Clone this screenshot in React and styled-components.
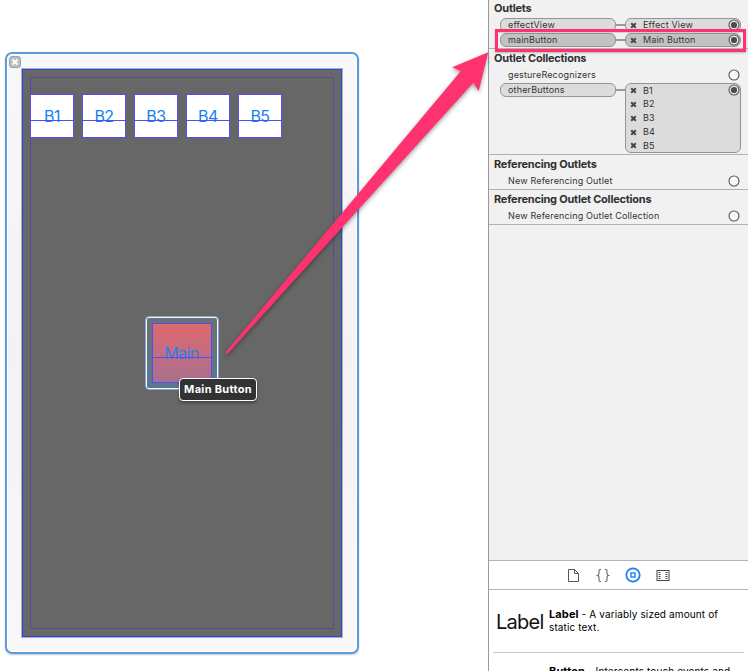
import React from "react";
import styled, { createGlobalStyle, css } from "styled-components";

const Global = createGlobalStyle`
  * { box-sizing: border-box; }
  html, body { margin: 0; overflow: hidden; background: #fff; }
  body { font-family: Inter, "Liberation Sans", sans-serif; }
`;

const Workspace = styled.main`
  position: relative;
  display: flex;
  width: 748px;
  height: 671px;
  overflow: hidden;
  background: #fff;
`;

/* Canvas */
const Canvas = styled.section`
  width: 488px;
  padding: 52px 0 0 5px;
`;
const Scene = styled.div`
  position: relative;
  width: 354px;
  height: 602px;
  padding: 14px;
  border: 2px solid #5b9bd8;
  border-radius: 7px;
  background: linear-gradient(#f8f8f8, #f3f3f3 50%, #f8f8f8);
  box-shadow: inset 0 0 0 1px #fff, 0 1px 2px rgba(0, 0, 0, 0.22);
`;
const CloseBadge = styled.span`
  position: absolute;
  left: 2px;
  top: 2px;
  display: flex;
  width: 12px;
  height: 12px;
  border: 1px solid #98a4ae;
  border-radius: 3px;
  background: #b4bfc7;
`;
const Device = styled.div`
  width: 322px;
  height: 570px;
  border: 1px solid #b0b0b8;
`;
const RootView = styled.div`
  height: 100%;
  padding: 7px;
  border: 1px solid #2447ef;
  background: #676767;
`;
const Margins = styled.div`
  display: flex;
  flex-direction: column;
  align-items: center;
  width: 304px;
  height: 552px;
  border: 1px solid #514ba6;
`;
const ButtonRow = styled.div`
  display: flex;
  align-self: flex-start;
  gap: 8px;
  margin: 16px 0 0 -1px;
`;
const outlined = css`
  display: flex;
  flex-direction: column;
  align-items: center;
  border: 1px solid #514ff0;
  color: #1480f5;
  font-size: 16px;
  letter-spacing: -0.5px;
`;
const SquareButton = styled.div`
  ${outlined}
  width: 44px;
  height: 44px;
  background: #fff;
`;
const MainSelection = styled.div`
  display: flex;
  width: 74px;
  height: 74px;
  margin-top: 178px;
  margin-left: -1px;
  padding: 4px;
  border: 1px solid #86a6d4;
  border-radius: 4px;
  background: linear-gradient(#6b7175, #5a7893);
  box-shadow: inset 0 0 0 1px #f4f6f8;
`;
const MainButton = styled.div`
  ${outlined}
  width: 60px;
  height: 60px;
  margin: 2px;
  background: linear-gradient(#df696e, #a9708e);
  color: #2d7fe6;
  letter-spacing: -0.55px;
`;
const Caption = styled.span`
  height: ${({ $drop }) => $drop}px;
  padding-top: ${({ $drop }) => $drop - 12}px;
  line-height: 15px;
`;
const Baseline = styled.i`
  z-index: 1;
  width: 100%;
  height: 1px;
  margin-top: -1px;
  background: #514ff0;
`;
const Tooltip = styled.div`
  position: absolute;
  left: 179px;
  top: 378px;
  width: 78px;
  height: 23px;
  border: 1px solid #fff;
  border-radius: 4px;
  background: rgba(48, 48, 48, 0.96);
  color: #fff;
  font-size: 11px;
  font-weight: 700;
  letter-spacing: 0.32px;
  line-height: 21px;
  text-align: center;
  white-space: nowrap;
  box-shadow: 0 2px 3px rgba(0, 0, 0, 0.35);
`;

/* Inspector */
const Inspector = styled.aside`
  display: flex;
  flex-direction: column;
  width: 260px;
  height: 671px;
  border-left: 1px solid #999;
  background: #f1f1f1;
`;
const Connections = styled.div`
  height: 561px;
  margin-top: -1px;
`;
const Group = styled.section`
  border-bottom: 1px solid #b2b2b2;
  padding-bottom: ${({ $tail }) => $tail || 0}px;
`;
const Heading = styled.h2`
  margin: 0;
  padding-left: 5px;
  height: 18px;
  color: #303030;
  font-size: 11px;
  font-weight: 700;
  letter-spacing: -0.22px;
  line-height: 18px;
  white-space: nowrap;
`;
const Row = styled.div`
  display: flex;
  align-items: flex-start;
  height: ${({ $h }) => $h || 15}px;
  padding-left: 11px;
  color: #333;
  font-size: 9px;
  letter-spacing: 0.16px;
  white-space: nowrap;
`;
const Outlets = styled.div`
  padding-top: 1px;
`;
const PlainRow = styled(Row)`
  height: 16px;
  padding: 0 8px 0 19px;
  line-height: 15px;
  justify-content: space-between;
  svg { margin-top: 2px; }
`;
const pill = css`
  border: 1px solid #949494;
  border-radius: 6px;
  background: ${({ $on }) => ($on ? "#c2c2c2" : "#dcdcdc")};
`;
const Source = styled.div`
  ${pill}
  width: 116px;
  height: 14px;
  padding-left: 7px;
  line-height: 12px;
`;
const Wire = styled.i`
  width: 9px;
  height: 2px;
  margin-top: 6px;
  background: #999;
`;
const Targets = styled.div`
  ${pill}
  position: relative;
  width: 116px;
`;
const Target = styled.div`
  display: flex;
  align-items: center;
  height: 14px;
  padding-left: 4px;
  gap: 6px;
  line-height: 14px;
  &:first-child { height: ${({ $single }) => ($single ? 12 : 13)}px; line-height: 12px; }
  &:last-of-type:not(:first-child) { height: 13px; }
`;
const WellSlot = styled.span`
  position: absolute;
  right: 0;
  top: 0;
  display: flex;
`;
const LibraryTabs = styled.nav`
  display: flex;
  align-items: center;
  justify-content: center;
  gap: 14px;
  height: 30px;
  padding-right: 1px;
  border-top: 1px solid #b4b4b4;
  border-bottom: 1px solid #b4b4b4;
  background: #fff;
`;
const Library = styled.div`
  flex: 1;
  overflow: hidden;
  padding: 0 4px;
  background: #fff;
`;
const LibraryItem = styled.article`
  display: flex;
  height: 63px;
  border-bottom: 1px solid #c8c8c8;
`;
const Sample = styled.div`
  width: 56px;
  padding: 20px 0 0 3px;
  color: #111;
  font-size: 20px;
  line-height: 25px;
  letter-spacing: -0.75px;
`;
const Description = styled.p`
  margin: 0;
  padding-top: ${({ $top }) => $top}px;
  color: #000;
  font-size: 10px;
  line-height: 13px;
  letter-spacing: 0.12px;
  white-space: nowrap;
  b { font-size: 11px; font-weight: 700; }
`;

/* Annotations */
const Highlight = styled.div`
  position: absolute;
  left: 495px;
  top: 29px;
  width: 251px;
  height: 23px;
  border: 3px solid #fd326e;
  box-shadow: 0 1px 2px rgba(0, 0, 0, 0.25), inset 0 1px 1px rgba(0, 0, 0, 0.15);
`;
const Arrow = styled.svg`
  position: absolute;
  left: 0;
  top: 0;
  pointer-events: none;
  filter: drop-shadow(0 2px 2px rgba(0, 0, 0, 0.38));
`;

const Well = ({ filled }) => (
  <svg width="12" height="12" viewBox="0 0 12 12">
    <circle cx="6" cy="6" r="5" fill={filled ? "#e8e8e8" : "#fafafa"} stroke="#555" strokeWidth="1.1" />
    {filled && <circle cx="6" cy="6" r="3.1" fill="#4b4b4b" />}
  </svg>
);
const Cross = () => (
  <svg width="7" height="7" viewBox="0 0 7 7">
    <path d="M1.2 1.2 5.8 5.8M5.8 1.2 1.2 5.8" stroke="#484848" strokeWidth="2" />
  </svg>
);

function Connection({ name, targets, on }) {
  return (
    <Row $h={targets.length > 1 ? 70 : 15}>
      <Source $on={on}>{name}</Source>
      <Wire />
      <Targets $on={on}>
        {targets.map((t) => (
          <Target key={t} $single={targets.length === 1}><Cross />{t}</Target>
        ))}
        <WellSlot><Well filled /></WellSlot>
      </Targets>
    </Row>
  );
}

const buttons = ["B1", "B2", "B3", "B4", "B5"];

export default function App() {
  return (
    <Workspace>
      <Global />
      <Canvas>
        <Scene>
          <CloseBadge>
            <svg width="10" height="10" viewBox="0 0 10 10">
              <path d="M2.5 2.5 7.5 7.5M7.5 2.5 2.5 7.5" stroke="#fff" strokeWidth="2" />
            </svg>
          </CloseBadge>
          <Device>
            <RootView>
              <Margins>
                <ButtonRow>
                  {buttons.map((b) => (
                    <SquareButton key={b}><Caption $drop={26}>{b}</Caption><Baseline /></SquareButton>
                  ))}
                </ButtonRow>
                <MainSelection>
                  <MainButton><Caption $drop={34}>Main</Caption><Baseline /></MainButton>
                </MainSelection>
              </Margins>
            </RootView>
          </Device>
        </Scene>
      </Canvas>
      <Inspector>
        <Connections>
          <Group>
            <Heading>Outlets</Heading>
            <Outlets>
              <Connection name="effectView" targets={["Effect View"]} />
              <Connection name="mainButton" targets={["Main Button"]} on />
            </Outlets>
          </Group>
          <Group $tail={1}>
            <Heading>Outlet Collections</Heading>
            <PlainRow>gestureRecognizers<Well /></PlainRow>
            <Connection name="otherButtons" targets={buttons} />
          </Group>
          <Group>
            <Heading>Referencing Outlets</Heading>
            <PlainRow>New Referencing Outlet<Well /></PlainRow>
          </Group>
          <Group>
            <Heading>Referencing Outlet Collections</Heading>
            <PlainRow>New Referencing Outlet Collection<Well /></PlainRow>
          </Group>
        </Connections>
        <LibraryTabs>
          <svg width="16" height="16" viewBox="0 0 16 16" fill="none" stroke="#555">
            <path d="M3.500 2.500h6l4 4v8h-10zM9.500 2.500v4h4" />
          </svg>
          <svg width="16" height="16" viewBox="0 0 16 16" fill="none" stroke="#666" strokeWidth="1.1">
            <path d="M6 2.500H5Q4 2.500 4 4v2.500Q4 8 2.500 8.500 4 9 4 10V13Q4 14.500 5 14.500h1M10 2.500h1Q12 2.500 12 4v2.500Q12 8 13.500 8.500 12 9 12 10v3Q12 14.500 11 14.500h-1" />
          </svg>
          <svg width="16" height="16" viewBox="0 0 16 16" fill="none" stroke="#1f80f8">
            <circle cx="8" cy="8" r="6.700" strokeWidth="1.800" />
            <rect x="6" y="6" width="4" height="4" strokeWidth="1.400" />
          </svg>
          <svg width="16" height="16" viewBox="0 0 16 16" fill="none" stroke="#444">
            <rect x="2" y="3.500" width="12" height="10" />
            <path d="M4.500 5v8M11.500 5v8" strokeWidth="2" strokeDasharray="1 1" />
          </svg>
        </LibraryTabs>
        <Library>
          <LibraryItem>
            <Sample>Label</Sample>
            <Description $top={18}><b>Label</b> - A variably sized amount of<br />static text.</Description>
          </LibraryItem>
          <LibraryItem>
            <Sample />
            <Description $top={12}><b>Button</b> - Intercepts touch events and</Description>
          </LibraryItem>
        </Library>
      </Inspector>
      <Tooltip>Main Button</Tooltip>
      <Highlight />
      <Arrow width="748" height="671" viewBox="0 0 748 671">
        <path d="M225.500 352.300 460.700 71.300 452.300 67.300 488.300 52.300 478.700 91 473.300 82.700 227.500 354Q226 354.500 225.500 352.300Z" fill="#fd326e" />
      </Arrow>
    </Workspace>
  );
}
